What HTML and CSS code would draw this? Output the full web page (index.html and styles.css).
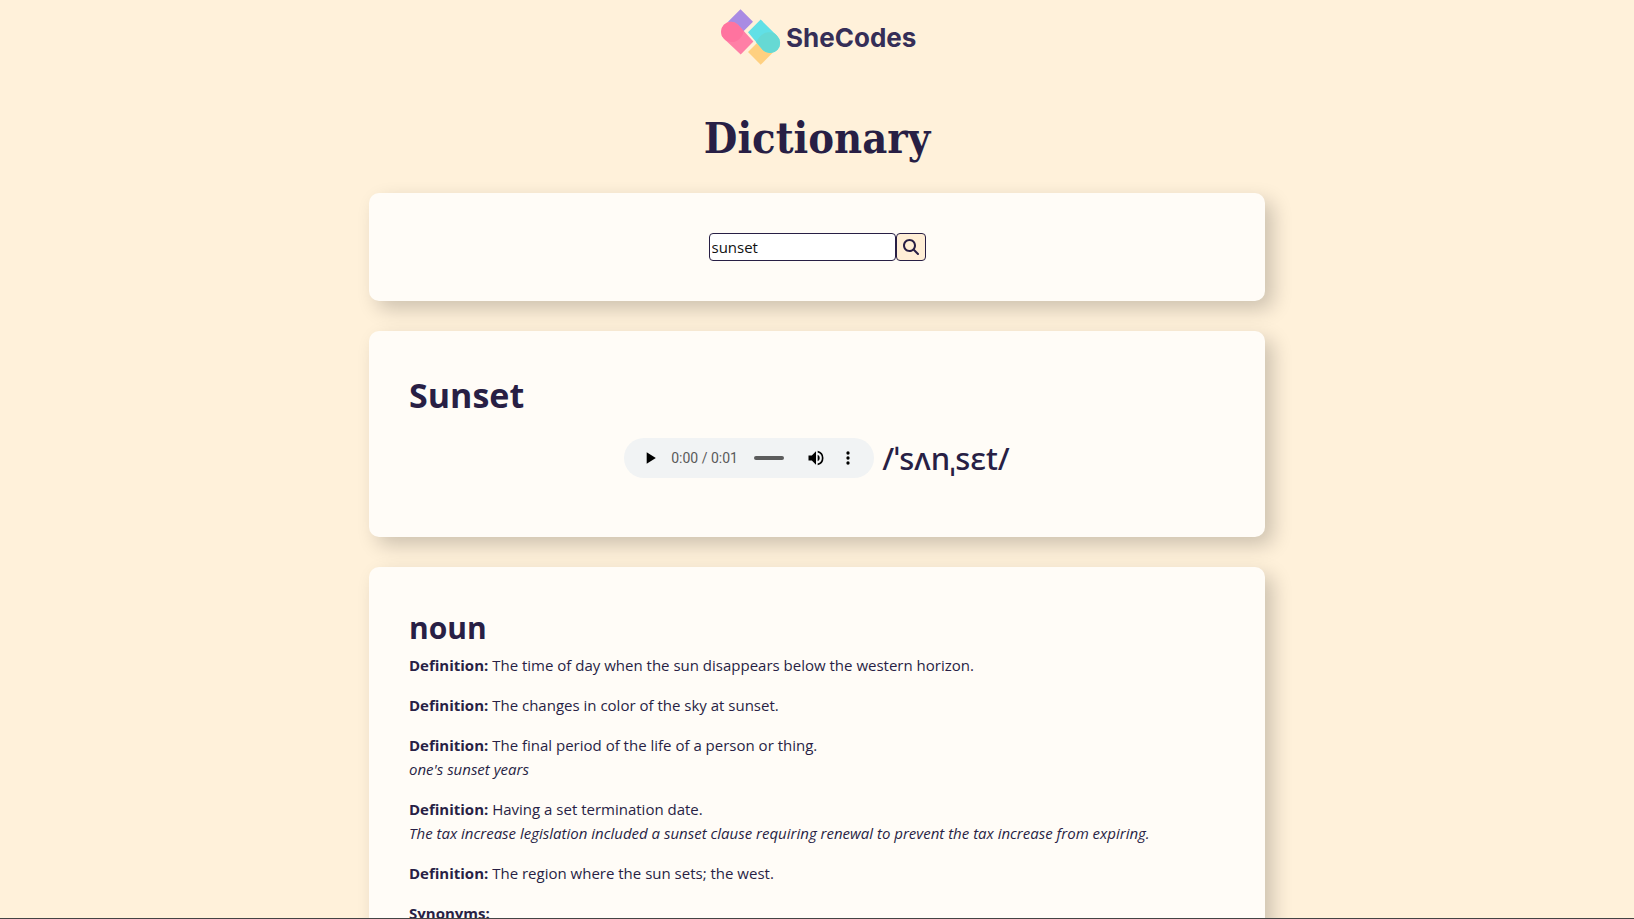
FILE: index.html
```html
<!DOCTYPE html>
<html lang="en">
<head>
<meta charset="utf-8">
<title>Dictionary</title>
<link rel="stylesheet" href="styles.css">
</head>
<body>
<div class="page">
  <div class="container">
    <header class="header">
      <svg class="logo" viewBox="-6 0 204 58" role="img" aria-label="SheCodes">
        <path fill="#a98be3" d="M19.500 1.200 32 13.700 19.500 26.200 7 13.700z"/>
        <path fill="#ff7fa6" d="M3 16.700A9.900 9.900 0 0 1 17 16.700L32.400 33.600 19.700 46.400 3 30.700A9.900 9.900 0 0 1 3 16.700z"/>
        <path fill="#ff739f" d="M3 16.700A9.900 9.900 0 0 1 17 16.700L22.500 22.700A12 12 0 0 1 5 32.600L3 30.700A9.900 9.900 0 0 1 3 16.700z"/>
        <path fill="#ffd080" d="M39.700 31.300 52.400 44 39.700 56.700 27 44z"/>
        <path fill="#61e0e6" d="M39.700 11.600 56 27.700A10 10 0 0 1 42 42.300L27 24.300z"/>
        <path fill="#66d9d4" d="M40 27.500A12 12 0 0 1 54 25.700L56 27.700A10 10 0 0 1 42 42.300L35 34Q37 30 40 27.500z"/>
        <text class="logo-text" x="65" y="39">SheCodes</text>
      </svg>
      <h1 class="title">Dictionary</h1>
    </header>
    <main class="main">
      <section class="card">
        <form class="search">
          <input class="search-input" type="text" value="sunset" aria-label="Word">
          <button class="search-button" type="button" aria-label="Search">
            <svg class="search-icon" viewBox="0 0 512 512"><path fill="currentColor" d="M416 208c0 45.900-14.900 88.300-40 122.700L502.600 457.400c12.500 12.500 12.500 32.800 0 45.300s-32.800 12.500-45.300 0L330.700 376c-34.400 25.200-76.800 40-122.700 40C93.100 416 0 322.900 0 208S93.100 0 208 0S416 93.100 416 208zM208 352a144 144 0 1 0 0-288 144 144 0 1 0 0 288z"/></svg>
          </button>
        </form>
      </section>
      <section class="card">
        <h2 class="word">Sunset</h2>
        <div class="phonetic">
          <div class="player">
            <button class="player-button" type="button" aria-label="Play"><svg class="player-icon" viewBox="0 0 24 24"><path d="M8 5v14l11-7z"/></svg></button>
            <span class="player-time">0:00 / 0:01</span>
            <input class="player-track" type="range" min="0" max="1" value="0" aria-label="Position">
            <button class="player-button" type="button" aria-label="Mute"><svg class="player-icon" viewBox="0 0 24 24"><path d="M3 9v6h4l5 5V4L7 9H3zm13.500 3A4.500 4.500 0 0 0 14 7.970v8.050A4.500 4.500 0 0 0 16.500 12zM14 3.230v2.060a7 7 0 0 1 0 13.420v2.060a9 9 0 0 0 0-17.540z"/></svg></button>
            <button class="player-button" type="button" aria-label="More options"><svg class="player-icon" viewBox="0 0 24 24"><circle cx="12" cy="6" r="2"/><circle cx="12" cy="12" r="2"/><circle cx="12" cy="18" r="2"/></svg></button>
          </div>
          <span class="phonetic-text">/ˈsʌnˌsɛt/</span>
        </div>
      </section>
      <section class="card">
        <h3 class="part">noun</h3>
        <p class="entry"><strong>Definition:</strong> The time of day when the sun disappears below the western horizon.</p>
        <p class="entry"><strong>Definition:</strong> The changes in color of the sky at sunset.</p>
        <p class="entry"><strong>Definition:</strong> The final period of the life of a person or thing.<br><em>one's sunset years</em></p>
        <p class="entry"><strong>Definition:</strong> Having a set termination date.<br><em>The tax increase legislation included a sunset clause requiring renewal to prevent the tax increase from expiring.</em></p>
        <p class="entry"><strong>Definition:</strong> The region where the sun sets; the west.</p>
        <p class="entry"><strong>Synonyms:</strong></p>
      </section>
    </main>
  </div>
</div>
</body>
</html>
```
FILE: styles.css
```css
* { box-sizing: border-box; }
body {
  margin: 0;
  background: #fff1da;
  color: #281f45;
  font: 15px/24px "Open Sans", "Noto Sans", sans-serif;
}
.page {
  height: 100vh;
  overflow: hidden;
  border-bottom: 1px solid #444;
}
.container {
  max-width: 896px;
  margin: 0 auto;
}
.header {
  display: flex;
  flex-direction: column;
  align-items: center;
  padding-top: 8px;
}
.logo { width: 204px; height: 58px; }
.logo-text {
  font: 700 26px Inter, sans-serif;
  fill: #352e57;
}
.title {
  margin: 44px 0 27px;
  font: 700 43px/56px "DejaVu Serif Condensed", "DejaVu Serif", serif;
}
.main {
  display: flex;
  flex-direction: column;
  gap: 30px;
}
.card {
  padding: 40px;
  border-radius: 10px;
  background: #fffcf7;
  box-shadow: 8px 8px 20px rgba(0, 0, 0, 0.2);
}
.search {
  display: flex;
  justify-content: center;
}
.search-input {
  width: 187px;
  height: 28px;
  padding: 0 2px;
  border: 1px solid #281f45;
  border-radius: 4px;
  background: #fff;
  color: #111;
  font: inherit;
}
.search-button {
  display: grid;
  place-items: center;
  width: 30px;
  height: 28px;
  padding: 0;
  border: 1px solid #281f45;
  border-radius: 4px;
  background: #ffeed6;
  color: #281f45;
}
.search-icon { width: 16px; height: 16px; }
.word {
  margin: 0 0 19px;
  font-size: 34px;
  line-height: 48px;
}
.phonetic {
  display: flex;
  align-items: center;
  justify-content: center;
  gap: 8px;
  margin-bottom: 19px;
}
.player {
  display: flex;
  align-items: center;
  width: 250px;
  height: 40px;
  padding: 0 10px;
  border-radius: 20px;
  background: #f1f3f4;
}
.player-button {
  display: grid;
  place-items: center;
  width: 32px;
  height: 32px;
  padding: 0;
  border: 0;
  background: none;
}
.player-icon { width: 20px; height: 20px; }
.player-time {
  margin: 0 16px 0 5px;
  color: #5a5a5a;
  font: 14px/20px Roboto, sans-serif;
  white-space: nowrap;
}
.player-track {
  appearance: none;
  width: 30px;
  height: 4px;
  margin: 0 auto 0 0;
  border-radius: 2px;
  background: #5c5c5c;
}
.player-track::-webkit-slider-thumb { appearance: none; width: 0; height: 0; }
.phonetic-text {
  font-family: "Noto Sans", sans-serif;
  font-size: 31px;
  line-height: 40px;
  font-weight: 500;
}
.part {
  margin: 0 0 4px;
  font-size: 30px;
  line-height: 42px;
}
.entry { margin: 0 0 16px; }
```
